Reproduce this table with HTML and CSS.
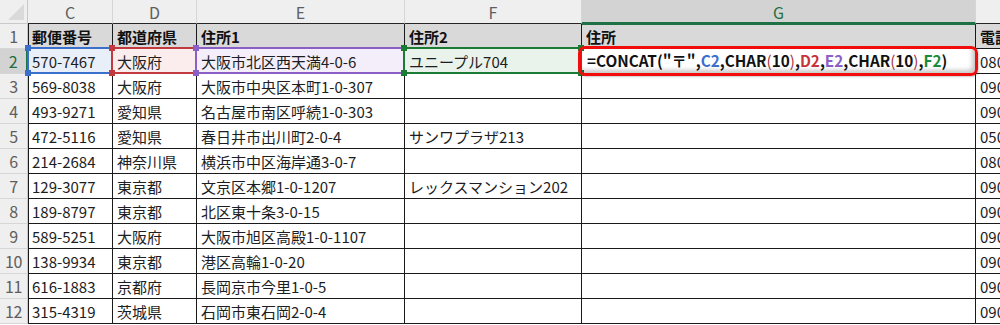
FILE: index.html
```html
<!DOCTYPE html>
<html lang="ja">
<head>
<meta charset="utf-8">
<link rel="stylesheet" href="styles.css">
</head>
<body>
<div class="sheet">
  <div class="ch corner"><span class="tri"></span></div>
  <div class="ch">C</div>
  <div class="ch">D</div>
  <div class="ch">E</div>
  <div class="ch">F</div>
  <div class="ch sel">G</div>
  <div class="ch"></div>

  <div class="rh">1</div>
  <div class="c hd first">郵便番号</div>
  <div class="c hd">都道府県</div>
  <div class="c hd">住所1</div>
  <div class="c hd">住所2</div>
  <div class="c hd gtop">住所</div>
  <div class="c hd">電話番号</div>

  <div class="rh rsel">2</div>
  <div class="c first ref blue">570-7467<i class="hl"></i></div>
  <div class="c ref red">大阪府<i class="hl"></i></div>
  <div class="c ref purple">大阪市北区西天満4-0-6<i class="hl"></i></div>
  <div class="c ref green">ユニープル704<i class="hl"></i></div>
  <div class="c formula"><span class="k">=CONCAT(&quot;〒&quot;,</span><span class="cb">C2</span>,CHAR<span class="pr">(</span>10<span class="pr">)</span>,<span class="cr">D2</span>,<span class="cp">E2</span>,CHAR<span class="pr">(</span>10<span class="pr">)</span>,<span class="cg">F2</span>)<i class="mark"></i></div>
  <div class="c">080-1234-5678</div>

  <div class="rh">3</div>
  <div class="c first">569-8038</div>
  <div class="c">大阪府</div>
  <div class="c">大阪市中央区本町1-0-307</div>
  <div class="c"></div>
  <div class="c"></div>
  <div class="c">090-1234-5678</div>

  <div class="rh">4</div>
  <div class="c first">493-9271</div>
  <div class="c">愛知県</div>
  <div class="c">名古屋市南区呼続1-0-303</div>
  <div class="c"></div>
  <div class="c"></div>
  <div class="c">090-1234-5678</div>

  <div class="rh">5</div>
  <div class="c first">472-5116</div>
  <div class="c">愛知県</div>
  <div class="c">春日井市出川町2-0-4</div>
  <div class="c">サンワプラザ213</div>
  <div class="c"></div>
  <div class="c">050-1234-5678</div>

  <div class="rh">6</div>
  <div class="c first">214-2684</div>
  <div class="c">神奈川県</div>
  <div class="c">横浜市中区海岸通3-0-7</div>
  <div class="c"></div>
  <div class="c"></div>
  <div class="c">080-1234-5678</div>

  <div class="rh">7</div>
  <div class="c first">129-3077</div>
  <div class="c">東京都</div>
  <div class="c">文京区本郷1-0-1207</div>
  <div class="c">レックスマンション202</div>
  <div class="c"></div>
  <div class="c">090-1234-5678</div>

  <div class="rh">8</div>
  <div class="c first">189-8797</div>
  <div class="c">東京都</div>
  <div class="c">北区東十条3-0-15</div>
  <div class="c"></div>
  <div class="c"></div>
  <div class="c">090-1234-5678</div>

  <div class="rh">9</div>
  <div class="c first">589-5251</div>
  <div class="c">大阪府</div>
  <div class="c">大阪市旭区高殿1-0-1107</div>
  <div class="c"></div>
  <div class="c"></div>
  <div class="c">090-1234-5678</div>

  <div class="rh">10</div>
  <div class="c first">138-9934</div>
  <div class="c">東京都</div>
  <div class="c">港区高輪1-0-20</div>
  <div class="c"></div>
  <div class="c"></div>
  <div class="c">090-1234-5678</div>

  <div class="rh">11</div>
  <div class="c first">616-1883</div>
  <div class="c">京都府</div>
  <div class="c">長岡京市今里1-0-5</div>
  <div class="c"></div>
  <div class="c"></div>
  <div class="c">090-1234-5678</div>

  <div class="rh">12</div>
  <div class="c first">315-4319</div>
  <div class="c">茨城県</div>
  <div class="c">石岡市東石岡2-0-4</div>
  <div class="c"></div>
  <div class="c"></div>
  <div class="c">090-1234-5678</div>
</div>
</body>
</html>
```

FILE: styles.css
```css
html, body {
  margin: 0;
  padding: 0;
  background: #ffffff;
  overflow: hidden;
}

body {
  width: 1000px;
  height: 325px;
  font-family: "Noto Sans CJK JP", "Noto Sans", sans-serif;
  font-size: 15px;
  color: #1d1d24;
}

.sheet {
  display: grid;
  grid-template-columns: 28px 85px 84px 208px 177px 394px 60px;
  grid-template-rows: 24px repeat(12, 25px);
  width: 1036px;
}

.ch {
  box-sizing: border-box;
  background: #efefef;
  border-right: 1px solid #d6d6d6;
  border-bottom: 1px solid #262626;
  color: #5e5e5e;
  display: flex;
  align-items: center;
  justify-content: center;
  font-size: 16px;
  line-height: 1;
  padding-top: 1px;
}

.ch.corner {
  border-bottom: 1px solid #c9c9c9;
  border-right: 1px solid #c9c9c9;
  position: relative;
}

.tri {
  position: absolute;
  right: 3px;
  bottom: 3px;
  width: 0;
  height: 0;
  border-left: 16px solid transparent;
  border-bottom: 16px solid #dadada;
}

.ch.sel {
  background: #d3d3d3;
  color: #1e6e3e;
  border-bottom: 2px solid #1e7145;
}

.rh {
  box-sizing: border-box;
  background: #efefef;
  border-bottom: 1px solid #d6d6d6;
  border-right: 1px solid #c9c9c9;
  color: #5e5e5e;
  display: flex;
  align-items: center;
  justify-content: center;
  font-size: 16px;
  line-height: 1;
  letter-spacing: -0.5px;
}

.rh.rsel {
  background: #d3d3d3;
  color: #1e6e3e;
  border-right: 2px solid #1e7145;
}

.c {
  box-sizing: border-box;
  border-right: 1px solid #1a1a1a;
  border-bottom: 1px solid #1a1a1a;
  display: flex;
  align-items: center;
  padding: 0 0 0 4px;
  white-space: nowrap;
  overflow: visible;
  line-height: 1;
  position: relative;
}

.c.first {
  border-left: 1px solid #1a1a1a;
  padding-left: 3px;
}

.c.hd {
  background: #d9d9d9;
  font-weight: bold;
  color: #111;
}

.c.gtop {
  border-top: 1px solid #1e7145;
}

.ref.blue { background: #e9eff9; --hc: #3b6fcc; }
.ref.red { background: #fbeded; --hc: #c23a3e; }
.ref.purple { background: #f3eefa; --hc: #8a5fc6; }
.ref.green { background: #e9f3eb; --hc: #1b7a33; }

.hl {
  position: absolute;
  left: -4px;
  top: -4px;
  right: -3px;
  bottom: -3px;
  pointer-events: none;
  background:
    linear-gradient(var(--hc), var(--hc)) left top / 6px 6px no-repeat,
    linear-gradient(var(--hc), var(--hc)) right top / 6px 6px no-repeat,
    linear-gradient(var(--hc), var(--hc)) left bottom / 6px 6px no-repeat,
    linear-gradient(var(--hc), var(--hc)) right bottom / 6px 6px no-repeat;
  z-index: 2;
}

.hl::before {
  content: "";
  position: absolute;
  left: 2px;
  top: 2px;
  right: 2px;
  bottom: 2px;
  border: 2px solid var(--hc);
}

.formula {
  font-weight: bold;
  color: #111;
  padding-left: 5px;
  font-size: 15.3px;
  letter-spacing: 0;
}

.cb { color: #3a6fd0; }
.cr { color: #c7343b; }
.cp { color: #8a5fc6; }
.cg { color: #1d8a3a; }
.pr { color: #a8323c; font-weight: normal; }

.mark {
  position: absolute;
  left: -4px;
  top: -3px;
  right: -3px;
  bottom: -3px;
  border: 3px solid #f20d0d;
  border-radius: 7px;
  box-shadow: inset -3px -3px 4px rgba(0, 0, 0, 0.22), 1px 1px 2px rgba(0, 0, 0, 0.2);
  z-index: 3;
  pointer-events: none;
}
```
